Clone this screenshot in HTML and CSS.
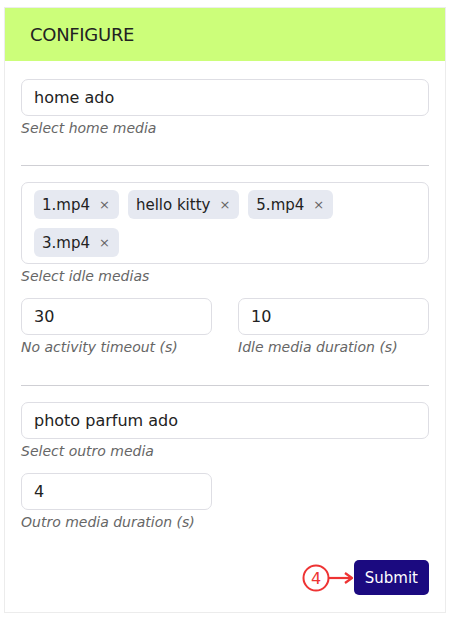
FILE: index.html
```html
<!DOCTYPE html>
<html lang="en">
<head>
    <meta charset="UTF-8">
    <meta name="viewport" content="width=device-width, initial-scale=1.0">
    <title>Configure</title>
    <link rel="stylesheet" href="styles.css">
</head>
<body>
    <div class="card">
        <div class="card-header">CONFIGURE</div>
        <form class="card-body">
            <div class="field">
                <div class="input">home ado</div>
                <div class="help">Select home media</div>
            </div>

            <hr class="first">

            <div class="field">
                <div class="tags">
                    <span class="tag">1.mp4 <span class="remove">&times;</span></span>
                    <span class="tag">hello kitty <span class="remove">&times;</span></span>
                    <span class="tag">5.mp4 <span class="remove">&times;</span></span>
                    <span class="tag">3.mp4 <span class="remove">&times;</span></span>
                </div>
                <div class="help">Select idle medias</div>
            </div>

            <div class="row">
                <div class="field">
                    <div class="input">30</div>
                    <div class="help">No activity timeout (s)</div>
                </div>
                <div class="field">
                    <div class="input">10</div>
                    <div class="help">Idle media duration (s)</div>
                </div>
            </div>

            <hr>

            <div class="field">
                <div class="input">photo parfum ado</div>
                <div class="help">Select outro media</div>
            </div>

            <div class="row">
                <div class="field">
                    <div class="input">4</div>
                    <div class="help">Outro media duration (s)</div>
                </div>
            </div>

            <div class="actions">
                <button type="button" class="submit">Submit</button>
                <svg class="marker" width="56" height="32" viewBox="0 0 56 32">
                    <circle cx="14" cy="16" r="12.5" fill="#fff" stroke="#ee3333" stroke-width="2"/>
                    <text x="14" y="22" text-anchor="middle" font-family="DejaVu Sans, sans-serif" font-size="16" fill="#ee3333">4</text>
                    <path d="M27 16 H48" stroke="#ee3333" stroke-width="2.2"/>
                    <path d="M43 11 L50 16 L43 21" fill="none" stroke="#ee3333" stroke-width="2.2" stroke-linejoin="round"/>
                </svg>
            </div>
        </form>
    </div>
</body>
</html>
```

FILE: styles.css
```css
body {
    margin: 0;
    padding: 7px 0 0 4px;
    font-family: "DejaVu Sans", sans-serif;
    color: #222;
    background: #fff;
}

.card {
    width: 440px;
    border: 1px solid #ececec;
}

.card-header {
    background-color: #ccfe7a;
    height: 53px;
    line-height: 53px;
    padding-left: 25px;
    font-size: 18px;
    font-weight: 500;
    letter-spacing: -0.3px;
}

.card-body {
    display: flex;
    flex-direction: column;
    padding: 18px 16px 17px 16px;
}

.field {
    margin-bottom: 12px;
}

.input {
    height: 37px;
    box-sizing: border-box;
    border: 1px solid #dedee4;
    border-radius: 7px;
    padding: 0 12px;
    line-height: 35px;
    font-size: 16px;
}

.help {
    margin-top: 3px;
    font-size: 14px;
    line-height: 19px;
    font-style: italic;
    color: #666;
}

hr {
    width: 100%;
    border: none;
    border-top: 1px solid #cfcfd4;
    margin: 16px 0 16px 0;
}

hr.first {
    margin-top: 15px;
}

.tags {
    display: flex;
    flex-wrap: wrap;
    gap: 9px;
    border: 1px solid #dedee4;
    border-radius: 7px;
    padding: 7px 12px 6px 12px;
}

.tag {
    display: inline-flex;
    align-items: center;
    height: 29px;
    padding: 0 9px 0 8px;
    border-radius: 6px;
    background-color: #e6e9f1;
    font-size: 15px;
}

.remove {
    margin-left: 9px;
    font-size: 13px;
    color: #666;
}

.row {
    display: grid;
    grid-template-columns: 1fr 1fr;
    gap: 26px;
}

.actions {
    position: relative;
    display: flex;
    justify-content: flex-end;
    margin-top: 16px;
}

.submit {
    height: 35px;
    padding: 0 11px;
    border: none;
    border-radius: 5px;
    background-color: #1b0a80;
    color: #fff;
    font-family: "DejaVu Sans", sans-serif;
    font-size: 15px;
    cursor: pointer;
}

.marker {
    position: absolute;
    right: 71px;
    top: 2px;
}
```
